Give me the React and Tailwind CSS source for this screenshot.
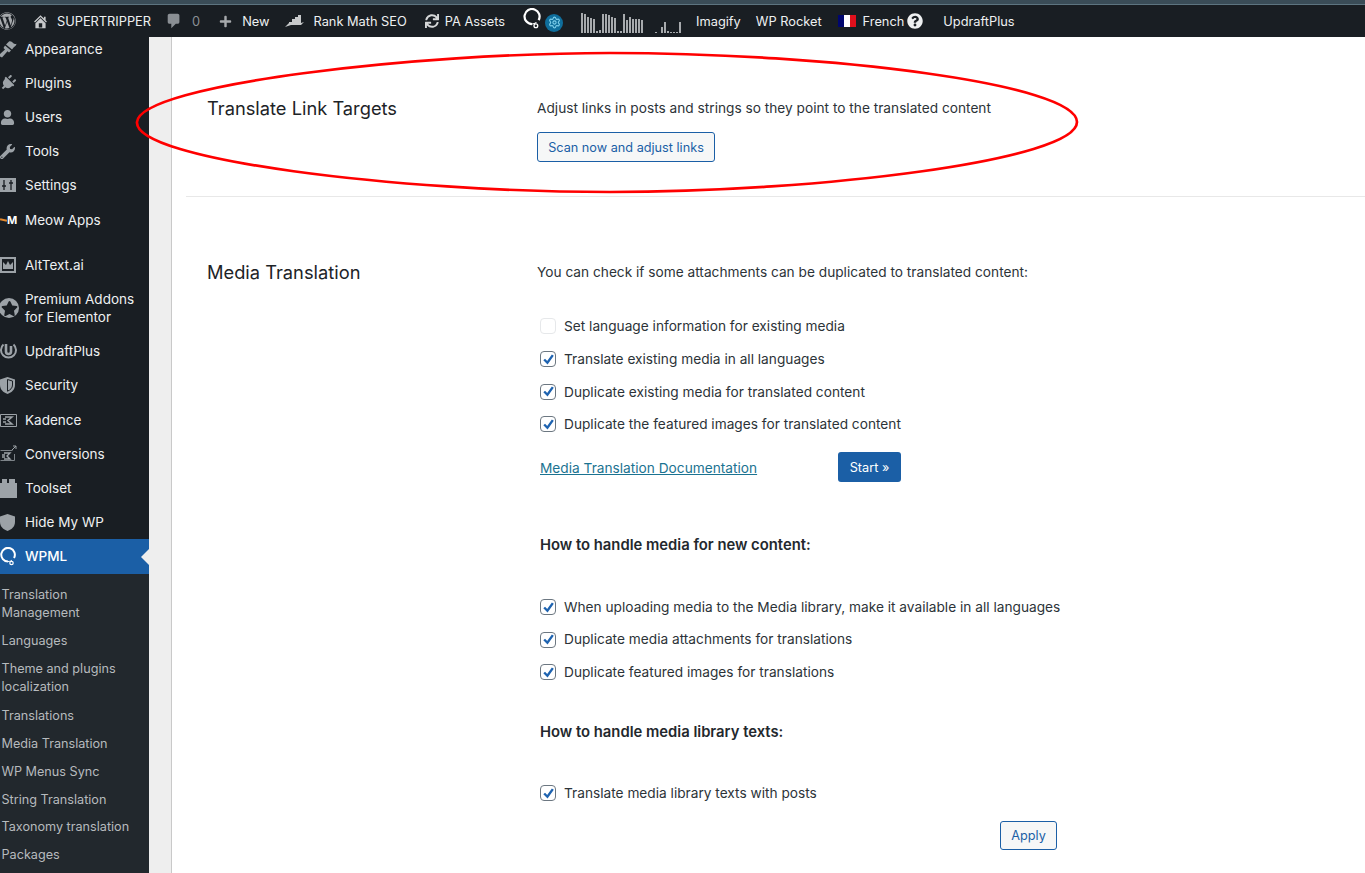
import React from 'react';
import { FaWordpress, FaPlus, FaSync, FaPlug, FaUser, FaWrench, FaStar, FaQuestionCircle } from 'react-icons/fa';
import { Settings } from 'lucide-react';

const font = { fontFamily: 'Inter, sans-serif' };

// bar heights for the little charts in the admin bar
const chartBars = [20, 19, 16, 15, 14, 2, 3, 19, 19, 18, 16, 15, 2, 2, 19, 13, 16, 14, 14, 14, 13];
const chartBarsSmall = [1, 0, 6, 11, 2, 1, 1, 1, 11];

const MenuIcon = ({ children }) => (
  <span className="w-[25px] shrink-0 flex items-center text-[#9ca2a7] overflow-hidden">{children}</span>
);

const AppearanceIcon = () => (
  <svg width="17" height="17" viewBox="0 0 17 17"><path fill="#9ca2a7" d="M6 3.500 9 .5c1.500-.6 3 .2 4 1.500 1 .9 2 1.300 3.500.8-.4 1.700-1.200 2.700-2.500 3.200L12 8.500zM5 4.500l6 5-2 2-1.500-1.200L2 16.500l-2-1V13l5-4.500-1.500-1.500z" /></svg>
);
const SettingsIcon = () => (
  <svg width="16" height="16" viewBox="0 0 16 16"><path fill="#9ca2a7" d="M0 1h16v14H0z" /><path stroke="#191e23" strokeWidth="1.300" d="M4 3v10M2 9h4M11 3v10M9 6h4" /></svg>
);
const MeowIcon = () => (
  <span className="flex items-center text-[11px] font-bold text-white"><span className="w-[7px] h-[2px] bg-[#e58a2e] rotate-12" /><span>M</span></span>
);
const AltIcon = () => (
  <svg width="16" height="18" viewBox="0 0 16 18"><path fill="#9ca2a7" d="M0 1h16v16H0z" /><path fill="#191e23" d="M2 3h12v12H2z" /><path fill="#9ca2a7" d="M3 13V6l3 3 2-4 2 4 3-3v7z" /></svg>
);
const PremiumIcon = () => (
  <span className="flex w-[20px] h-[20px] -ml-[1px] rounded-full bg-[#9ca2a7] items-center justify-center text-[#191e23]"><FaStar size={17} /></span>
);
const UpdraftIcon = () => (
  <svg width="17" height="18" viewBox="0 0 17 18"><path fill="none" stroke="#9ca2a7" strokeWidth="2" d="M3.500 2.500a7.500 7.500 0 1 0 10 0" /><path fill="none" stroke="#9ca2a7" strokeWidth="2.600" d="M6 2v7.500a2.500 2.500 0 0 0 5 0V4" /></svg>
);
const ShieldIcon = () => (
  <svg width="15" height="17" viewBox="0 0 15 17"><path fill="#9ca2a7" d="M7.500 0 15 2.400V8c0 4.400-3.200 7.500-7.500 9C3.200 15.500 0 12.400 0 8V2.400z" /></svg>
);
const SecurityIcon = () => (
  <svg width="15" height="17" viewBox="0 0 15 17"><path fill="#9ca2a7" d="M7.500 0 15 2.400V8c0 4.400-3.200 7.500-7.500 9C3.200 15.500 0 12.400 0 8V2.400z" /><path fill="none" stroke="#191e23" d="M7.500 2.500 12.500 4v4c0 3-2.200 5-5 6.200z" /></svg>
);
const KadenceIcon = () => (
  <svg width="17" height="16" viewBox="0 0 17 16"><path fill="none" stroke="#9ca2a7" d="M.5 2.500h16v12H.5z" /><path stroke="#9ca2a7" strokeWidth="1.500" d="M5 5h7L8 8.500l4 3.500H5M3 7h3M3 10h3" fill="none" /></svg>
);
const ConversionsIcon = () => (
  <svg width="17" height="18" viewBox="0 0 17 18"><path fill="none" stroke="#7d8388" d="M.5 5.500h12M.5 15.500h14V9" /><path stroke="#9ca2a7" strokeWidth="1.400" d="M4 8h6L7 11l3 3H4M2 10h3M2 12h3" fill="none" /><path stroke="#9ca2a7" d="M12 5l4-4M13 1h3v3" fill="none" /></svg>
);
const ToolsetIcon = () => (
  <svg width="18" height="20" viewBox="0 0 18 20"><path fill="#9ca2a7" d="M2 1h5v4h2V1h6v4h2v15H0V5h2z" /></svg>
);
const WpmlIcon = ({ color = '#fff', size = 16 }) => (
  <svg width={size} height={size + 3} viewBox="0 0 16 19"><path fill="none" stroke={color} strokeWidth="2" d="M8 14.500A6.800 6.800 0 1 1 14 11" /><path fill="none" stroke={color} strokeWidth="1" d="M8 14.500c2 0 3-.5 4-1.500" /><circle cx="11.500" cy="16" r="1.700" fill="none" stroke={color} strokeWidth="1.200" /></svg>
);

const menu = [
  { label: 'Appearance', h: 'h-[34px]', icon: <AppearanceIcon /> },
  { label: 'Plugins', h: 'h-[34px]', icon: <FaPlug size={16} className="rotate-45" /> },
  { label: 'Users', h: 'h-[34px]', icon: <FaUser size={15} /> },
  { label: 'Tools', h: 'h-[34px]', icon: <FaWrench size={15} /> },
  { label: 'Settings', h: 'h-[34px]', icon: <SettingsIcon /> },
  { label: 'Meow Apps', h: 'h-[36px]', icon: <MeowIcon /> },
  { label: 'AltText.ai', h: 'h-[34px] mt-[10px]', icon: <AltIcon /> },
  { label: 'Premium Addons for Elementor', h: 'h-[52px]', icon: <PremiumIcon /> },
  { label: 'UpdraftPlus', h: 'h-[34px]', icon: <UpdraftIcon /> },
  { label: 'Security', h: 'h-[34px]', icon: <SecurityIcon /> },
  { label: 'Kadence', h: 'h-[35px]', icon: <KadenceIcon /> },
  { label: 'Conversions', h: 'h-[34px]', icon: <ConversionsIcon /> },
  { label: 'Toolset', h: 'h-[34px]', icon: <ToolsetIcon /> },
  { label: 'Hide My WP', h: 'h-[34px]', icon: <ShieldIcon /> },
];

const subMenu = [
  { label: 'Translation Management', h: 'h-[42px] mb-[2px]' },
  { label: 'Languages', h: 'h-[27px]' },
  { label: 'Theme and plugins localization', h: 'h-[48px]' },
  { label: 'Translations', h: 'h-[28px]' },
  { label: 'Media Translation', h: 'h-[28px]' },
  { label: 'WP Menus Sync', h: 'h-[28px]' },
  { label: 'String Translation', h: 'h-[27px]' },
  { label: 'Taxonomy translation', h: 'h-[28px]' },
  { label: 'Packages', h: 'h-[28px]' },
];

const Checkbox = ({ checked }) => (
  <span className={`w-4 h-4 shrink-0 rounded-[4px] border flex items-center justify-center bg-white ${checked ? 'border-[#6c7781]' : 'border-[#e6e8ea]'}`}>
    {checked && (
      <svg width="13" height="13" viewBox="0 0 12 12"><path d="M2 6 5 9l5-7" fill="none" stroke="#1e63b0" strokeWidth="2.200" /></svg>
    )}
  </span>
);

const CheckRow = ({ checked = true, children }) => (
  <label className="flex items-center gap-2 h-5 pl-[3px]">
    <Checkbox checked={checked} />
    <span className="whitespace-nowrap">{children}</span>
  </label>
);

const TopItem = ({ children, className = '' }) => (
  <span className={`flex items-center whitespace-nowrap pt-px ${className}`}>{children}</span>
);

export default function App() {
  return (
    <div style={font} className="relative h-[873px] w-[1365px] overflow-hidden bg-white text-[13.7px] text-[#2c3338]">
      {/* top strip of the browser */}
      <div className="h-[5px] bg-[#3a4c57] border-b border-[#5d7480]" />

      {/* admin bar */}
      <div className="h-[32px] bg-[#191e23] flex items-center text-[12.8px] text-[#eef0f1]">
        <FaWordpress size={18} className="text-[#a7aaad] -ml-[2px] shrink-0" />
        <svg width="17" height="17" viewBox="0 0 20 20" className="ml-[16px] shrink-0"><path fill="#c7c9cb" d="M16 8.500l1.530 1.530-1.060 1.060L10 4.620l-6.470 6.470-1.060-1.060L10 2.500l4 4v-2h2v4zm-6-2.460l6 5.990V18H4v-5.970zM12 17v-5H8v5h4z" /></svg>
        <TopItem className="ml-[8px]">SUPERTRIPPER</TopItem>
        <svg width="18" height="18" viewBox="0 0 20 20" className="ml-[14px] shrink-0"><path fill="#8a8f94" d="M5 2h9c1.100 0 2 .9 2 2v7c0 1.100-.9 2-2 2h-2l-5 5v-5H5c-1.100 0-2-.9-2-2V4c0-1.100.9-2 2-2z" /></svg>
        <TopItem className="ml-[9px] text-[#8a8f94]">0</TopItem>
        <FaPlus size={13} className="text-[#a7aaad] ml-[19px] shrink-0" />
        <TopItem className="ml-[10px]">New</TopItem>
        <svg width="20" height="14" viewBox="0 0 20 14" className="ml-[15px] shrink-0"><path fill="#c7c9cb" d="M5 8h3V5h3V3h3V1h3v8l3-1-3 3H7l-6 2 4-4z" /></svg>
        <TopItem className="ml-[9px]">Rank Math SEO</TopItem>
        <FaSync size={14} className="text-[#d5d7d8] ml-[18px] shrink-0" />
        <TopItem className="ml-[6px]">PA Assets</TopItem>
        <span className="ml-[18px] flex items-start shrink-0">
          <span className="-mt-[3px]"><WpmlIcon size={18} /></span>
          <span className="ml-[4px] mt-[3px] w-[18px] h-[18px] rounded-full bg-[#0f6e9c] flex items-center justify-center text-[#7fd0ec]"><Settings size={13} /></span>
        </span>
        <span className="ml-[18px] flex items-end h-[20px] gap-[1px] mt-[4px] shrink-0">
          {chartBars.map((b, i) => (
            <span key={i} className="w-[2px] bg-[#a7aaad]" style={{ height: b }} />
          ))}
        </span>
        <span className="ml-[12px] flex items-end h-[20px] gap-[1px] mt-[4px] shrink-0">
          {chartBarsSmall.map((b, i) => (
            <span key={i} className="w-[2px] bg-[#a7aaad]" style={{ height: b }} />
          ))}
        </span>
        <TopItem className="ml-[15px]">Imagify</TopItem>
        <TopItem className="ml-[15px]">WP Rocket</TopItem>
        <span className="ml-[16px] flex w-[18px] h-[12px] shrink-0">
          <span className="flex-1 bg-[#00066e]" />
          <span className="flex-1 bg-white" />
          <span className="flex-1 bg-[#e0101c]" />
        </span>
        <TopItem className="ml-[7px]">French</TopItem>
        <FaQuestionCircle size={16} className="text-[#eef0f1] ml-[3px] shrink-0" />
        <TopItem className="ml-[20px]">UpdraftPlus</TopItem>
      </div>

      <div className="flex h-[836px]">
        {/* sidebar */}
        <aside className="w-[149px] shrink-0 bg-[#191e23] text-[#eef0f1] text-[13.5px] overflow-hidden">
          <div className="-mt-[5px]">
            {menu.map((m) => (
              <div key={m.label} className={`flex items-center ${m.h}`}>
                <MenuIcon>{m.icon}</MenuIcon>
                <span className="leading-[18px] w-[122px]">{m.label}</span>
              </div>
            ))}
            <div className="h-[35px] bg-[#1b5fa6] flex items-center relative font-medium text-white">
              <MenuIcon><WpmlIcon /></MenuIcon>
              <span>WPML</span>
              <span className="absolute right-0 top-[10px] border-y-[8px] border-r-[8px] border-y-transparent border-r-[#eeeeee]" />
            </div>
            <div className="bg-[#22282d] text-[#b6babd] pt-[9px] h-[400px] pl-[1.5px] text-[12.65px]">
              {subMenu.map((s) => (
                <div key={s.label} className={`flex items-center leading-[18px] ${s.h}`}>
                  <span className="w-[132px]">{s.label}</span>
                </div>
              ))}
            </div>
          </div>
        </aside>

        {/* gutter */}
        <div className="w-[23px] shrink-0 bg-[#eeeeee] border-r border-[#c9c9c9]" />

        {/* content */}
        <main className="flex-1 pl-[14px]">
          <section className="flex h-[160px] border-b border-[#e8e8e8] pl-[21px]">
            <h2 className="w-[330px] pt-[59px] text-[18.3px] leading-[24px] font-normal text-[#1d2327]">Translate Link Targets</h2>
            <div className="pt-[62px]">
              <p className="leading-[18px]">Adjust links in posts and strings so they point to the translated content</p>
              <button className="mt-[15px] h-[30px] w-[178px] pt-px rounded-[3px] border border-[#1b5fa6] bg-[#f6f7f7] text-[#1b5fa6] text-[12.7px]">Scan now and adjust links</button>
            </div>
          </section>

          <section className="flex pl-[21px]">
            <h2 className="w-[330px] pt-[63px] text-[18.3px] leading-[24px] font-normal text-[#1d2327]">Media Translation</h2>
            <div className="pt-[66px] w-[520px]">
              <p className="leading-[18px]">You can check if some attachments can be duplicated to translated content:</p>

              <div className="mt-[35.4px] flex flex-col gap-[12.7px]">
                <CheckRow checked={false}>Set language information for existing media</CheckRow>
                <CheckRow>Translate existing media in all languages</CheckRow>
                <CheckRow>Duplicate existing media for translated content</CheckRow>
                <CheckRow>Duplicate the featured images for translated content</CheckRow>
              </div>

              <div className="mt-[17.6px] pl-[3px] flex items-center h-[30px]">
                <a className="w-[298px] pt-[2px] text-[#1b7391] underline">Media Translation Documentation</a>
                <button className="h-[30px] w-[63px] pt-px rounded-[3px] bg-[#1b5fa6] text-white text-[12.7px]">Start »</button>
              </div>

              <h3 className="mt-[53px] pl-[3px] text-[14.8px] leading-[20px] font-semibold text-[#23282d]">How to handle media for new content:</h3>

              <div className="mt-[42px] flex flex-col gap-[12.7px]">
                <CheckRow>When uploading media to the Media library, make it available in all languages</CheckRow>
                <CheckRow>Duplicate media attachments for translations</CheckRow>
                <CheckRow>Duplicate featured images for translations</CheckRow>
              </div>

              <h3 className="mt-[40px] pl-[3px] text-[14.8px] leading-[20px] font-semibold text-[#23282d]">How to handle media library texts:</h3>

              <div className="mt-[41px]">
                <CheckRow>Translate media library texts with posts</CheckRow>
              </div>

              <div className="flex justify-end mt-[18px]">
                <button className="h-[29px] w-[57px] rounded-[3px] border border-[#1b5fa6] bg-[#f6f7f7] text-[#1b5fa6] text-[12.7px]">Apply</button>
              </div>
            </div>
          </section>
        </main>
      </div>

      {/* red annotation circled on the screenshot */}
      <svg className="absolute inset-0 pointer-events-none" width="1365" height="873" viewBox="0 0 1365 873">
        <path d="M137 122C140 84 420 53 610 53C830 53 1077 84 1077 122C1077 160 820 192 610 192C400 192 134 160 137 122Z" fill="none" stroke="#ff0000" strokeWidth="2.700" />
      </svg>
    </div>
  );
}
